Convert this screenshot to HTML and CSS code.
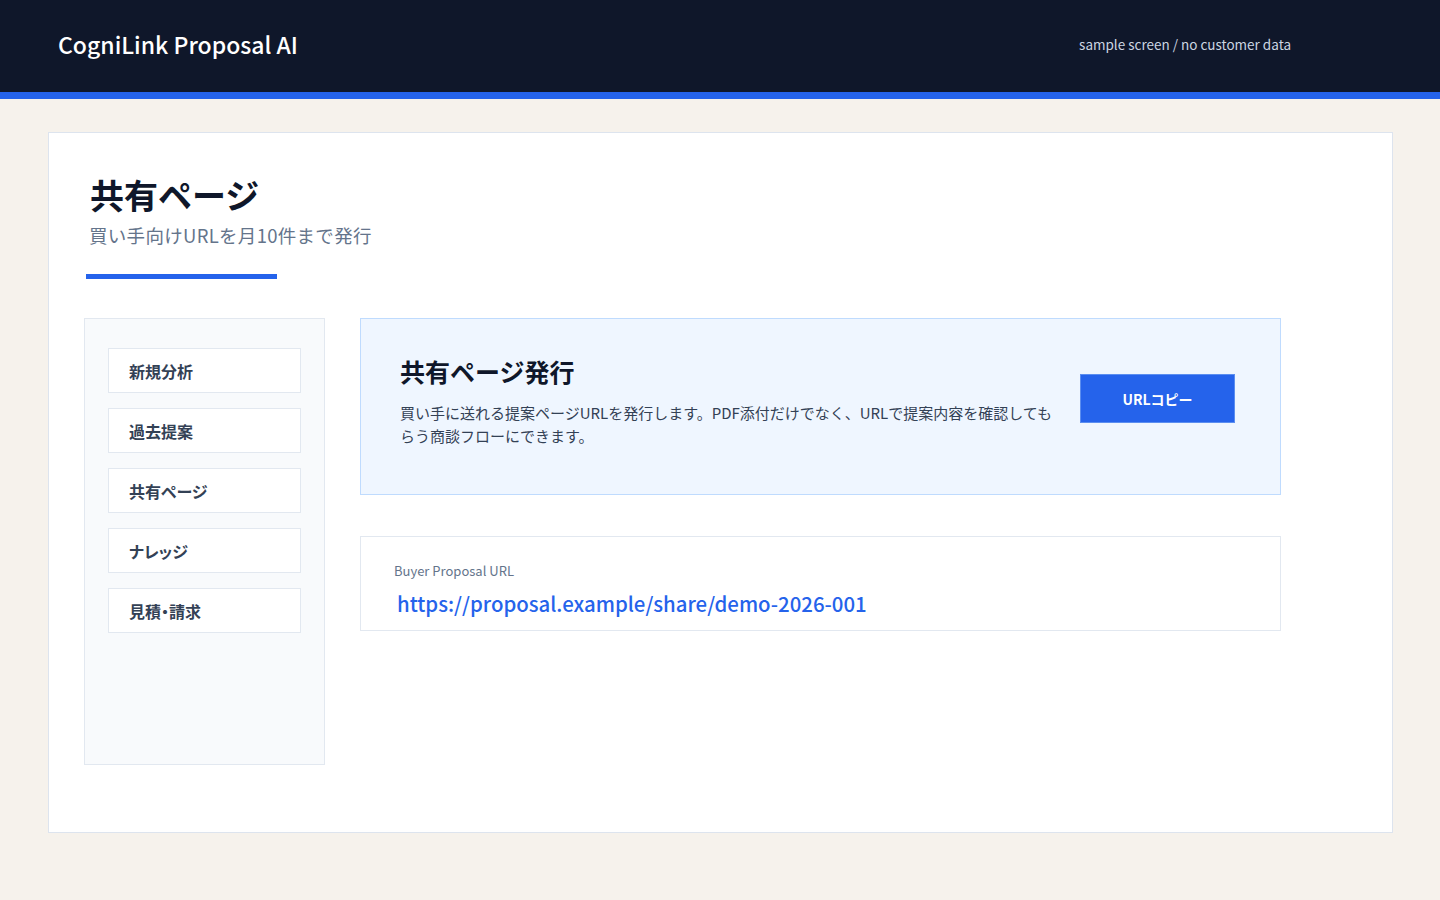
FILE: index.html
```html
<!DOCTYPE html>
<html lang="ja">
<head>
<meta charset="utf-8">
<title>CogniLink Proposal AI</title>
<link rel="stylesheet" href="styles.css">
</head>
<body>
<header class="topbar">
  <div class="brand">CogniLink Proposal AI</div>
  <div class="note">sample screen / no customer data</div>
</header>
<main class="page">
  <section class="panel">
    <div class="heading">
      <h1 class="title">共有ページ</h1>
      <p class="subtitle">買い手向けURLを月10件まで発行</p>
      <div class="accent"></div>
    </div>
    <div class="layout">
      <nav class="sidebar">
        <div class="nav-item">新規分析</div>
        <div class="nav-item">過去提案</div>
        <div class="nav-item">共有ページ</div>
        <div class="nav-item">ナレッジ</div>
        <div class="nav-item">見積・請求</div>
      </nav>
      <div class="content">
        <div class="issue-card">
          <div class="issue-text">
            <h2 class="issue-title">共有ページ発行</h2>
            <p class="issue-desc">買い手に送れる提案ページURLを発行します。PDF添付だけでなく、URLで提案内容を確認してもらう商談フローにできます。</p>
          </div>
          <button class="copy-btn">URLコピー</button>
        </div>
        <div class="url-box">
          <div class="url-label">Buyer Proposal URL</div>
          <div class="url-value">https://proposal.example/share/demo-2026-001</div>
        </div>
      </div>
    </div>
  </section>
</main>
</body>
</html>
```
FILE: styles.css
```css
* { box-sizing: border-box; }
html, body { margin: 0; padding: 0; }
body {
  background: #f6f2ec;
  font-family: "Noto Sans CJK JP", "Noto Sans", sans-serif;
  color: #0f172a;
  min-height: 900px;
}
.topbar {
  height: 99px;
  background: #0f172a;
  border-bottom: 7px solid #2563eb;
  display: flex;
  align-items: center;
  justify-content: space-between;
  padding: 0 149px 5px 58px;
}
.brand {
  color: #ffffff;
  font-size: 23px;
  font-weight: 500;
}
.note {
  color: #cbd5e1;
  font-size: 13.5px;
}
.page {
  padding: 33px 47px 0 48px;
}
.panel {
  background: #ffffff;
  border: 1px solid #dde4ee;
  height: 701px;
  padding: 38px 35px 0 35px;
}
.heading {
  padding-left: 2px;
}
.title {
  margin: 0 0 0 4px;
  font-size: 34px;
  font-weight: 700;
  line-height: 48px;
  color: #0f172a;
}
.subtitle {
  margin: 3px 0 0 3px;
  font-size: 18.5px;
  line-height: 26px;
  letter-spacing: 0.3px;
  color: #64748b;
}
.accent {
  width: 191px;
  height: 5px;
  background: #2563eb;
  margin-top: 26px;
}
.layout {
  display: grid;
  grid-template-columns: 241px 921px;
  column-gap: 35px;
  margin-top: 39px;
}
.sidebar {
  background: #f8fafc;
  border: 1px solid #e2e8f0;
  height: 447px;
  padding: 29px 23px 0 23px;
  display: flex;
  flex-direction: column;
  gap: 15px;
}
.nav-item {
  height: 45px;
  background: #ffffff;
  border: 1px solid #e2e8f0;
  padding: 0 20px;
  display: flex;
  align-items: center;
  font-size: 16px;
  font-feature-settings: "palt" 1;
  font-weight: 700;
  color: #334155;
}
.content {
  display: flex;
  flex-direction: column;
  gap: 41px;
}
.issue-card {
  height: 177px;
  background: #eff6ff;
  border: 1px solid #bfdbfe;
  padding: 35px 45px 0 39px;
  display: flex;
  align-items: flex-start;
  gap: 20px;
}
.issue-text {
  flex: 1;
}
.issue-title {
  margin: 0;
  font-size: 25px;
  font-weight: 700;
  line-height: 34px;
  color: #0f172a;
}
.issue-desc {
  margin: 13px 0 0 0;
  font-size: 15px;
  line-height: 23px;
  color: #334155;
}
.copy-btn {
  flex: 0 0 155px;
  height: 49px;
  background: #2563eb;
  border: 1px solid #5b8ef0;
  color: #ffffff;
  font-family: inherit;
  font-size: 14px;
  font-weight: 700;
  margin-top: 20px;
}
.url-box {
  height: 95px;
  background: #ffffff;
  border: 1px solid #e2e8f0;
  padding: 24px 33px 0 33px;
}
.url-label {
  font-size: 13px;
  line-height: 20px;
  color: #64748b;
}
.url-value {
  margin-top: 8px;
  margin-left: 3px;
  font-size: 20.4px;
  line-height: 28px;
  font-weight: 500;
  color: #2563eb;
}
```
